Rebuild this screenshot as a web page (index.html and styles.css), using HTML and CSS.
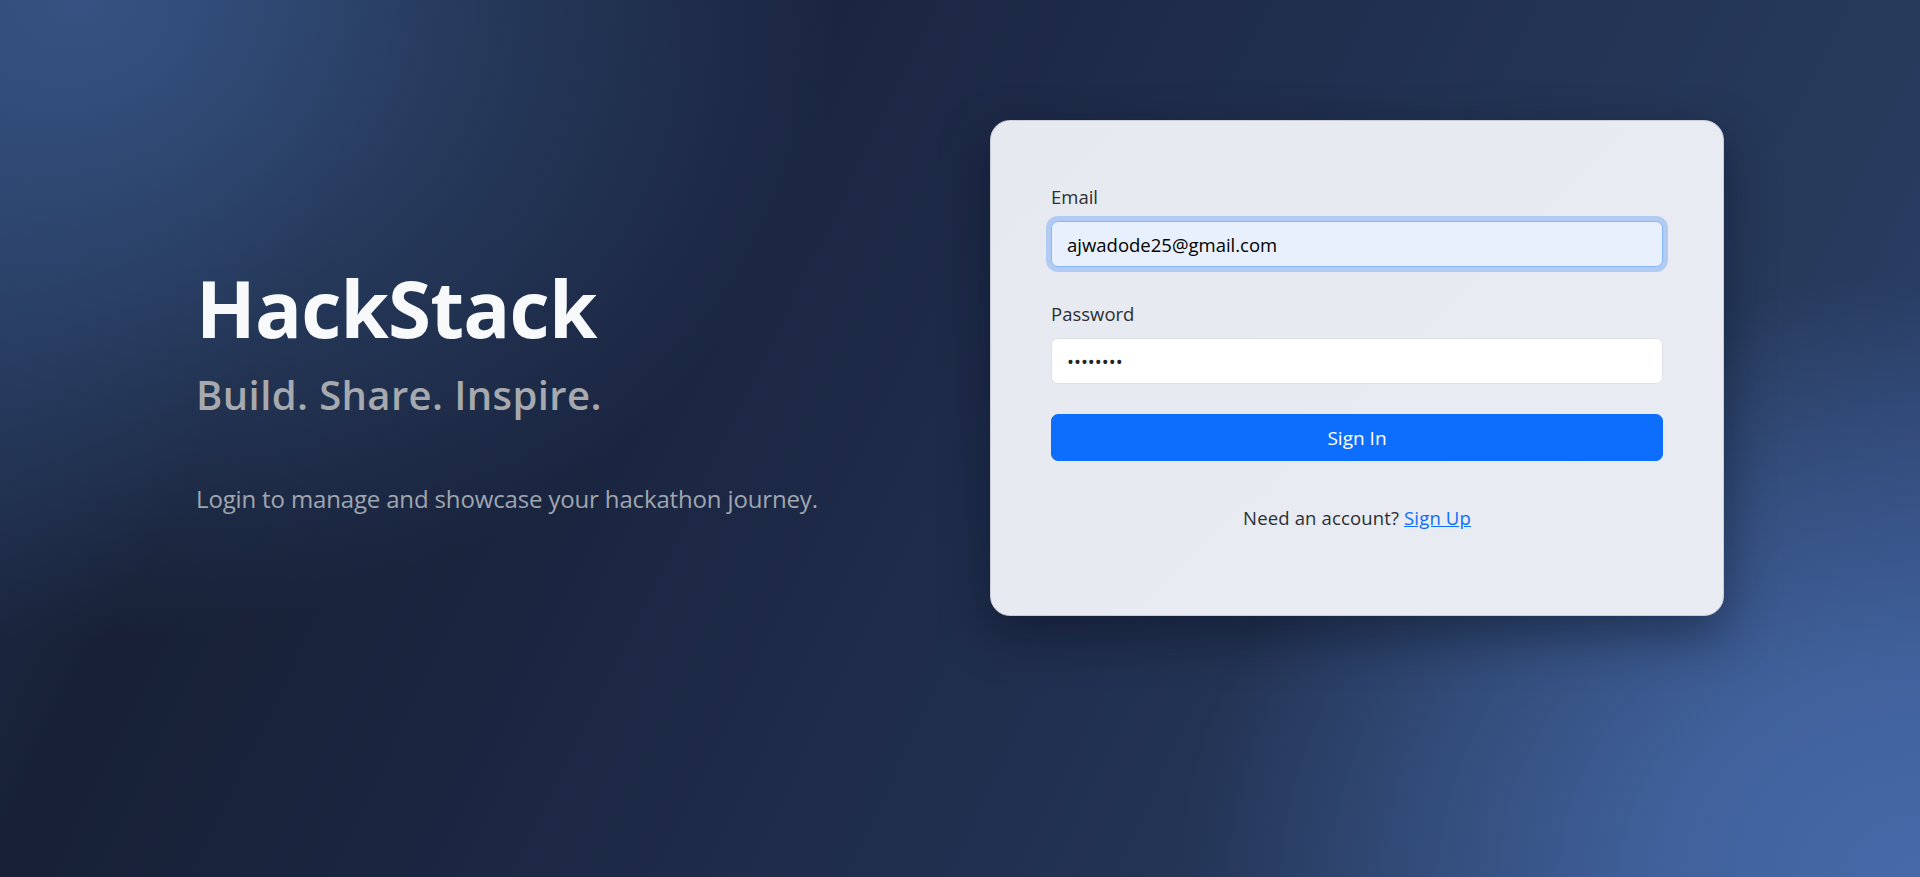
FILE: index.html
```html
<!DOCTYPE html>
<html lang="en">
<head>
<meta charset="utf-8">
<title>HackStack - Login</title>
<link rel="stylesheet" href="styles.css">
</head>
<body>
<main class="page">
  <section class="intro">
    <h1 class="brand">HackStack</h1>
    <h2 class="tagline">Build. Share. Inspire.</h2>
    <p class="lead">Login to manage and showcase your hackathon journey.</p>
  </section>
  <section class="card">
    <form class="form">
      <div class="field">
        <label class="label" for="email">Email</label>
        <input class="input input-focus" id="email" type="email" value="ajwadode25@gmail.com">
      </div>
      <div class="field field-second">
        <label class="label" for="password">Password</label>
        <input class="input" id="password" type="password" value="12345678">
      </div>
      <button class="btn" type="button">Sign In</button>
    </form>
    <p class="switch">Need an account? <a class="link" href="#">Sign Up</a></p>
  </section>
</main>
</body>
</html>
```
FILE: styles.css
```css
* { box-sizing: border-box; }
html, body { margin: 0; padding: 0; }
body {
  min-height: 100vh;
  font-family: "Open Sans", "Noto Sans", sans-serif;
  color: #212529;
  background:
    radial-gradient(ellipse 760px 640px at 4% 0%, rgba(53,82,130,1) 0%, rgba(52,81,127,0.75) 30%, rgba(52,81,127,0) 100%),
    radial-gradient(ellipse 740px 600px at 100% 100%, rgba(70,106,168,1) 0%, rgba(68,103,165,0.85) 35%, rgba(68,103,165,0) 100%),
    linear-gradient(116deg, #223355 0%, #172035 18%, #1a2540 34%, #213050 60%, #273a5c 82%, #2c4270 100%);
  overflow: hidden;
}
.page {
  min-height: 100vh;
  padding: 120px 196px 0;
  display: grid;
  grid-template-columns: 1fr 734px;
  align-items: start;
}
.intro { padding-top: 142px; }
.brand {
  margin: 0;
  font-size: 78px;
  line-height: 1.2;
  font-weight: 700;
  color: #f8f9fa;
  letter-spacing: -0.8px;
}
.tagline {
  margin: 15px 0 0;
  font-size: 40px;
  line-height: 1.2;
  font-weight: 600;
  color: #a6a9ae;
  letter-spacing: 0.4px;
}
.lead {
  margin: 62px 0 0;
  font-size: 24px;
  line-height: 1.5;
  color: #a0a6b0;
  letter-spacing: -0.15px;
}
.card {
  background: linear-gradient(135deg, #e6e9f0 0%, #e9ecf3 100%);
  border: 1px solid #c9cdd6;
  border-radius: 20px;
  padding: 61px 60px 83px;
  box-shadow: 0 18px 50px rgba(5, 10, 25, 0.45);
}
.form { display: flex; flex-direction: column; }
.field { display: flex; flex-direction: column; }
.field-second { margin-top: 32px; }
.label {
  font-size: 18.5px;
  line-height: 29px;
  margin-bottom: 10px;
  color: #2b2f34;
}
.input {
  height: 46px;
  width: 100%;
  border: 1px solid #dee2e6;
  border-radius: 7px;
  background: #ffffff;
  padding: 0 15px;
  font-family: inherit;
  font-size: 18.5px;
  color: #212529;
  outline: none;
}
.input-focus {
  background: #e8f0fe;
  border-color: #86b7fe;
  box-shadow: 0 0 0 5px #b1cbf2;
  color: #000;
}
.btn {
  margin-top: 30px;
  height: 47px;
  width: 100%;
  border: 1px solid #0d6efd;
  border-radius: 7px;
  background: #0d6efd;
  color: #ffffff;
  font-family: inherit;
  font-size: 19px;
  cursor: pointer;
}
.switch {
  margin: 42px 0 0;
  text-align: center;
  font-size: 18.5px;
  line-height: 29px;
  color: #2b2f34;
  letter-spacing: 0.15px;
}
.link { color: #0d6efd; text-decoration: underline; }
```
